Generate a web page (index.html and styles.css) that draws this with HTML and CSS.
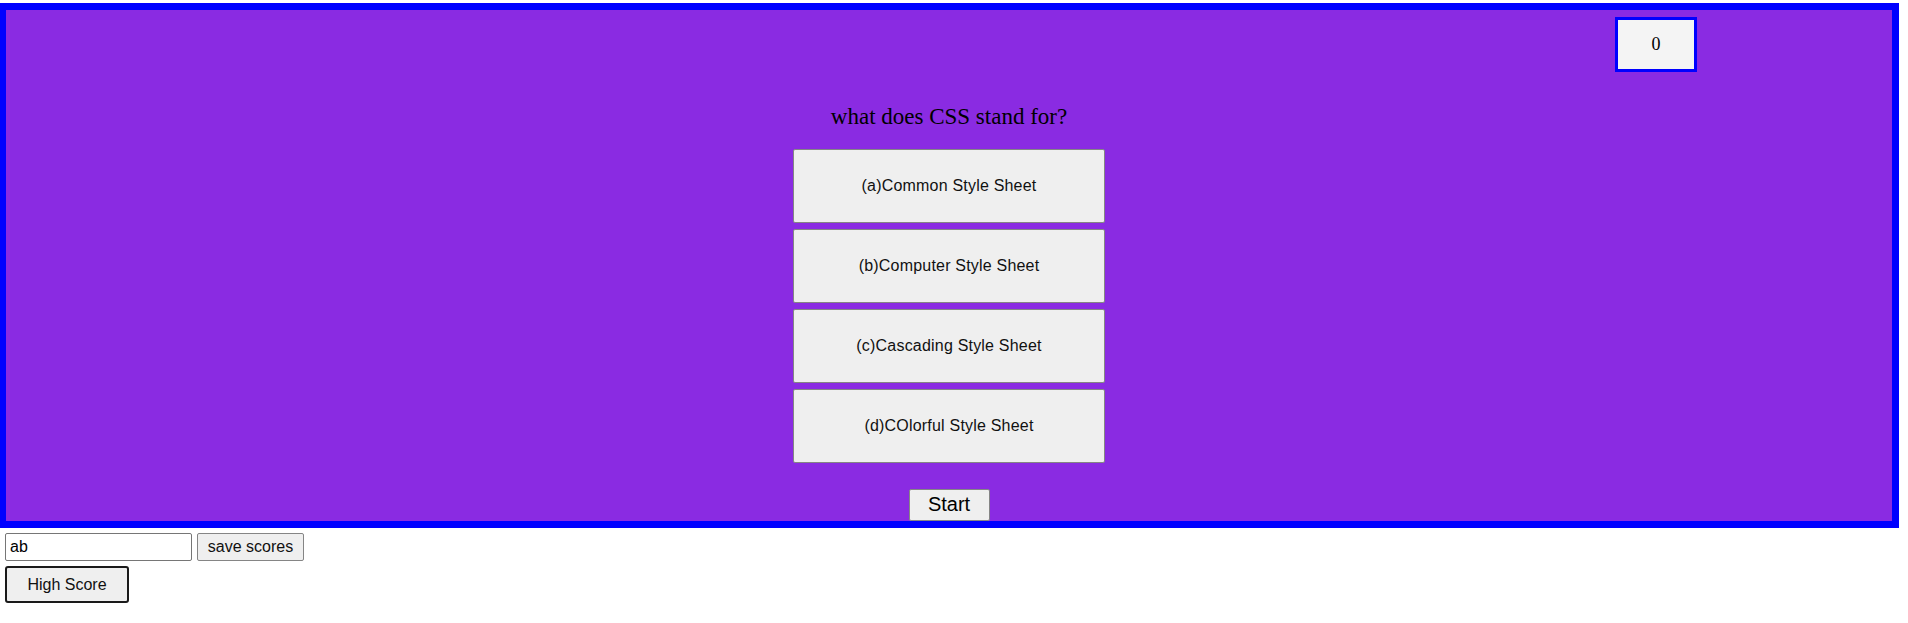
FILE: index.html
```html
<!DOCTYPE html>
<html>
<head>
<meta charset="utf-8">
<link rel="stylesheet" href="styles.css">
</head>
<body>
<div class="quiz">
  <div class="quiz-header">
    <div class="score">0</div>
  </div>
  <div class="question">what does CSS stand for?</div>
  <div class="options">
    <button class="option">(a)Common Style Sheet</button>
    <button class="option">(b)Computer Style Sheet</button>
    <button class="option">(c)Cascading Style Sheet</button>
    <button class="option">(d)COlorful Style Sheet</button>
  </div>
  <button class="start">Start</button>
</div>
<div class="save-row">
  <input class="name" type="text" value="ab">
  <button class="save">save scores</button>
</div>
<button class="high">High Score</button>
</body>
</html>
```
FILE: styles.css
```css
html, body {
  margin: 0;
  padding: 0;
  background: #ffffff;
}
body {
  font-family: "Liberation Sans", Arial, sans-serif;
}
.quiz {
  box-sizing: border-box;
  width: 1900px;
  height: 525px;
  margin: 3px 0 0 -1px;
  border: 7px solid #0000ff;
  background: #8a2be2;
  overflow: hidden;
  display: flex;
  flex-direction: column;
  align-items: center;
}
.quiz-header {
  align-self: stretch;
  display: flex;
  justify-content: flex-end;
  padding: 7px 195px 0 0;
}
.score {
  box-sizing: border-box;
  width: 82px;
  height: 55px;
  border: 3px solid #0000ff;
  background: #f4f4f4;
  display: flex;
  align-items: center;
  justify-content: center;
  font-family: "Liberation Serif", "Times New Roman", serif;
  font-size: 18px;
  color: #000;
}
.question {
  margin-top: 32px;
  font-family: "Liberation Serif", "Times New Roman", serif;
  font-size: 23px;
  line-height: 26px;
  color: #000;
}
.options {
  margin-top: 19px;
  display: flex;
  flex-direction: column;
  gap: 6px;
}
.option {
  box-sizing: border-box;
  width: 312px;
  height: 74px;
  margin: 0;
  border: 1px solid #858585;
  border-radius: 2px;
  background: #efefef;
  font-family: "Liberation Sans", Arial, sans-serif;
  font-size: 16px;
  letter-spacing: 0.2px;
  color: #111;
  padding: 0;
}
.start {
  box-sizing: border-box;
  margin-top: 26px;
  width: 81px;
  height: 40px;
  border: 1px solid #858585;
  border-radius: 2px;
  background: #efefef;
  font-family: "Liberation Sans", Arial, sans-serif;
  font-size: 20px;
  color: #000;
  padding: 0 0 2px 0;
}
.save-row {
  display: flex;
  gap: 5px;
  margin: 5px 0 0 5px;
}
.name {
  box-sizing: border-box;
  width: 187px;
  height: 28px;
  margin: 0;
  border: 1px solid #767676;
  border-radius: 2px;
  padding: 0 4px;
  font-family: "Liberation Sans", Arial, sans-serif;
  font-size: 16px;
  color: #000;
  background: #fff;
}
.save {
  box-sizing: border-box;
  width: 107px;
  height: 28px;
  margin: 0;
  border: 1px solid #858585;
  border-radius: 2px;
  background: #efefef;
  font-family: "Liberation Sans", Arial, sans-serif;
  font-size: 16px;
  color: #111;
  padding: 0;
}
.high {
  display: block;
  box-sizing: border-box;
  width: 124px;
  height: 37px;
  margin: 5px 0 0 5px;
  border: 2px solid #1a1a1a;
  border-radius: 3px;
  background: #efefef;
  font-family: "Liberation Sans", Arial, sans-serif;
  font-size: 16px;
  color: #111;
  padding: 0;
}
```
